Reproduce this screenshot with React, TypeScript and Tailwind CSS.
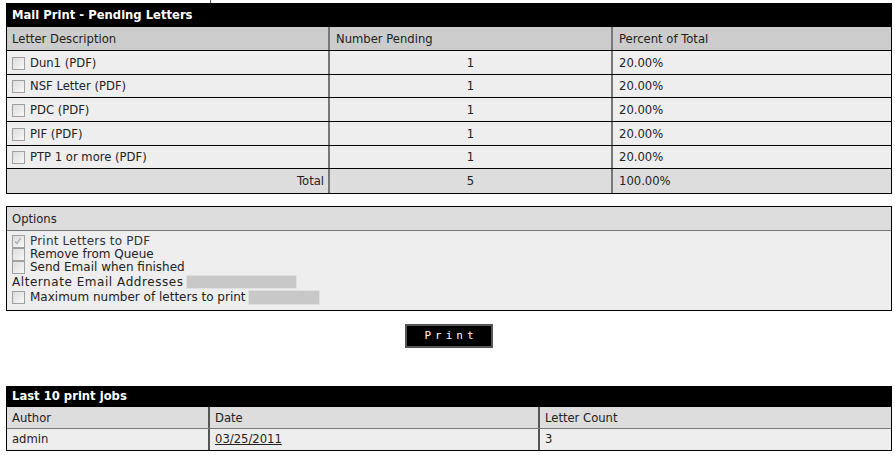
import React from "react";

const letters = [
  { name: "Dun1 (PDF)", count: 1, pct: "20.00%", h: "h-[24px]" },
  { name: "NSF Letter (PDF)", count: 1, pct: "20.00%", h: "h-[23px]" },
  { name: "PDC (PDF)", count: 1, pct: "20.00%", h: "h-[24px]" },
  { name: "PIF (PDF)", count: 1, pct: "20.00%", h: "h-[24px]" },
  { name: "PTP 1 or more (PDF)", count: 1, pct: "20.00%", h: "h-[23px]" },
];

function Box({ checked = false }: { checked?: boolean }) {
  return (
    <span className="relative inline-block w-[13px] h-[13px] shrink-0 border border-[#a0a0a0] bg-gradient-to-br from-[#dcdcdc] to-[#f8f8f8]">
      {checked && (
        <svg viewBox="0 0 13 13" className="absolute inset-0 w-[11px] h-[11px]">
          <path d="M2.5 6.5 L4.8 9 L9 2.5" fill="none" stroke="#a8a8a8" strokeWidth="1.4" />
        </svg>
      )}
    </span>
  );
}

export default function App() {
  return (
    <div className="w-[895px] h-[455px] bg-white text-[#222] text-[11.6px] overflow-hidden" style={{ fontFamily: '"DejaVu Sans", Verdana, sans-serif' }}>
      <div className="h-[3px] ml-[210px] w-px bg-[#555]" />

      {/* Pending letters */}
      <div className="mx-[6px] w-[886px] border border-black">
        <div className="h-[23px] bg-black text-white font-bold flex items-center pl-[5px] pt-[1px]">Mail Print - Pending Letters</div>
        <div className="flex h-[24px] bg-[#cccccc] border-b border-black">
          <div className="w-[323px] pl-[5px] flex items-center border-r-2 border-[#777] pt-[2px]">Letter Description</div>
          <div className="w-[283px] pl-[6px] flex items-center border-r-2 border-[#777] pt-[2px]">Number Pending</div>
          <div className="flex-1 pl-[6px] flex items-center pt-[2px]">Percent of Total</div>
        </div>
        {letters.map((l) => (
          <div key={l.name} className={`flex ${l.h} bg-[#eeeeee] border-b border-black`}>
            <div className="w-[323px] pl-[5px] flex items-center gap-[5px] border-r-2 border-[#777] pt-[1px]">
              <Box />
              <span className="pt-[1px]">{l.name}</span>
            </div>
            <div className="w-[283px] flex items-center justify-center border-r-2 border-[#777] pt-[2px]">{l.count}</div>
            <div className="flex-1 pl-[6px] flex items-center pt-[2px]">{l.pct}</div>
          </div>
        ))}
        <div className="flex h-[24px] bg-[#dddddd]">
          <div className="w-[323px] pr-[4px] flex items-center justify-end border-r-2 border-[#777] pt-[2px]">Total</div>
          <div className="w-[283px] flex items-center justify-center border-r-2 border-[#777] pt-[2px]">5</div>
          <div className="flex-1 pl-[6px] flex items-center pt-[2px]">100.00%</div>
        </div>
      </div>

      {/* Options */}
      <div className="mx-[6px] mt-[12px] w-[886px] border border-black">
        <div className="h-[24px] bg-[#dddddd] border-b border-[#777] pl-[5px] pt-[2px] flex items-center">Options</div>
        <div className="bg-[#eeeeee] pl-[5px] pt-[4px] pb-[5px] leading-[13px] text-[12px]">
          <div className="flex items-center gap-[5px] h-[13px] text-[#333]">
            <Box checked />
            <span className="tracking-[0.2px]">Print Letters to PDF</span>
          </div>
          <div className="flex items-center gap-[5px] h-[13px]">
            <Box />
            <span>Remove from Queue</span>
          </div>
          <div className="flex items-center gap-[5px] h-[13px]">
            <Box />
            <span>Send Email when finished</span>
          </div>
          <div className="flex items-center gap-[2px] mt-[1px] h-[14px]">
            <span className="tracking-[0.55px]">Alternate Email Addresses</span>
            <span className="inline-block w-[111px] h-[14px] bg-[#c8c8c8] border border-[#e0e0e0]" />
          </div>
          <div className="flex items-center gap-[5px] mt-[1px] h-[15px]">
            <Box />
            <span>Maximum number of letters to print</span>
            <span className="inline-block w-[72px] h-[15px] -ml-[3px] bg-[#c8c8c8] border border-[#e0e0e0]" />
          </div>
        </div>
      </div>

      {/* Print button */}
      <div className="flex justify-center mt-[13px] pl-[3px]">
        <button className="w-[88px] h-[24px] bg-black border-2 border-[#555] text-white text-[11px] tracking-[4px] pl-[4px]" style={{ fontFamily: '"DejaVu Sans Mono", monospace' }}>
          Print
        </button>
      </div>

      {/* Last print jobs */}
      <div className="mx-[6px] mt-[38px] w-[886px] border border-black border-t-0">
        <div className="h-[21px] bg-black text-white font-bold flex items-center pl-[5px] pt-[1px]">Last 10 print jobs</div>
        <div className="flex h-[22px] bg-[#dddddd] border-b border-[#777]">
          <div className="w-[203px] pl-[5px] flex items-center border-r-2 border-[#555] pt-[2px]">Author</div>
          <div className="w-[330px] pl-[5px] flex items-center border-r-2 border-[#555] pt-[2px]">Date</div>
          <div className="flex-1 pl-[5px] flex items-center pt-[2px]">Letter Count</div>
        </div>
        <div className="flex h-[21px] bg-[#eeeeee]">
          <div className="w-[203px] pl-[5px] flex items-center border-r-2 border-[#555] pt-[1px]">admin</div>
          <div className="w-[330px] pl-[5px] flex items-center border-r-2 border-[#555] pt-[1px]">
            <a href="#" className="underline text-[#222]">03/25/2011</a>
          </div>
          <div className="flex-1 pl-[5px] flex items-center pt-[1px]">3</div>
        </div>
      </div>
    </div>
  );
}
